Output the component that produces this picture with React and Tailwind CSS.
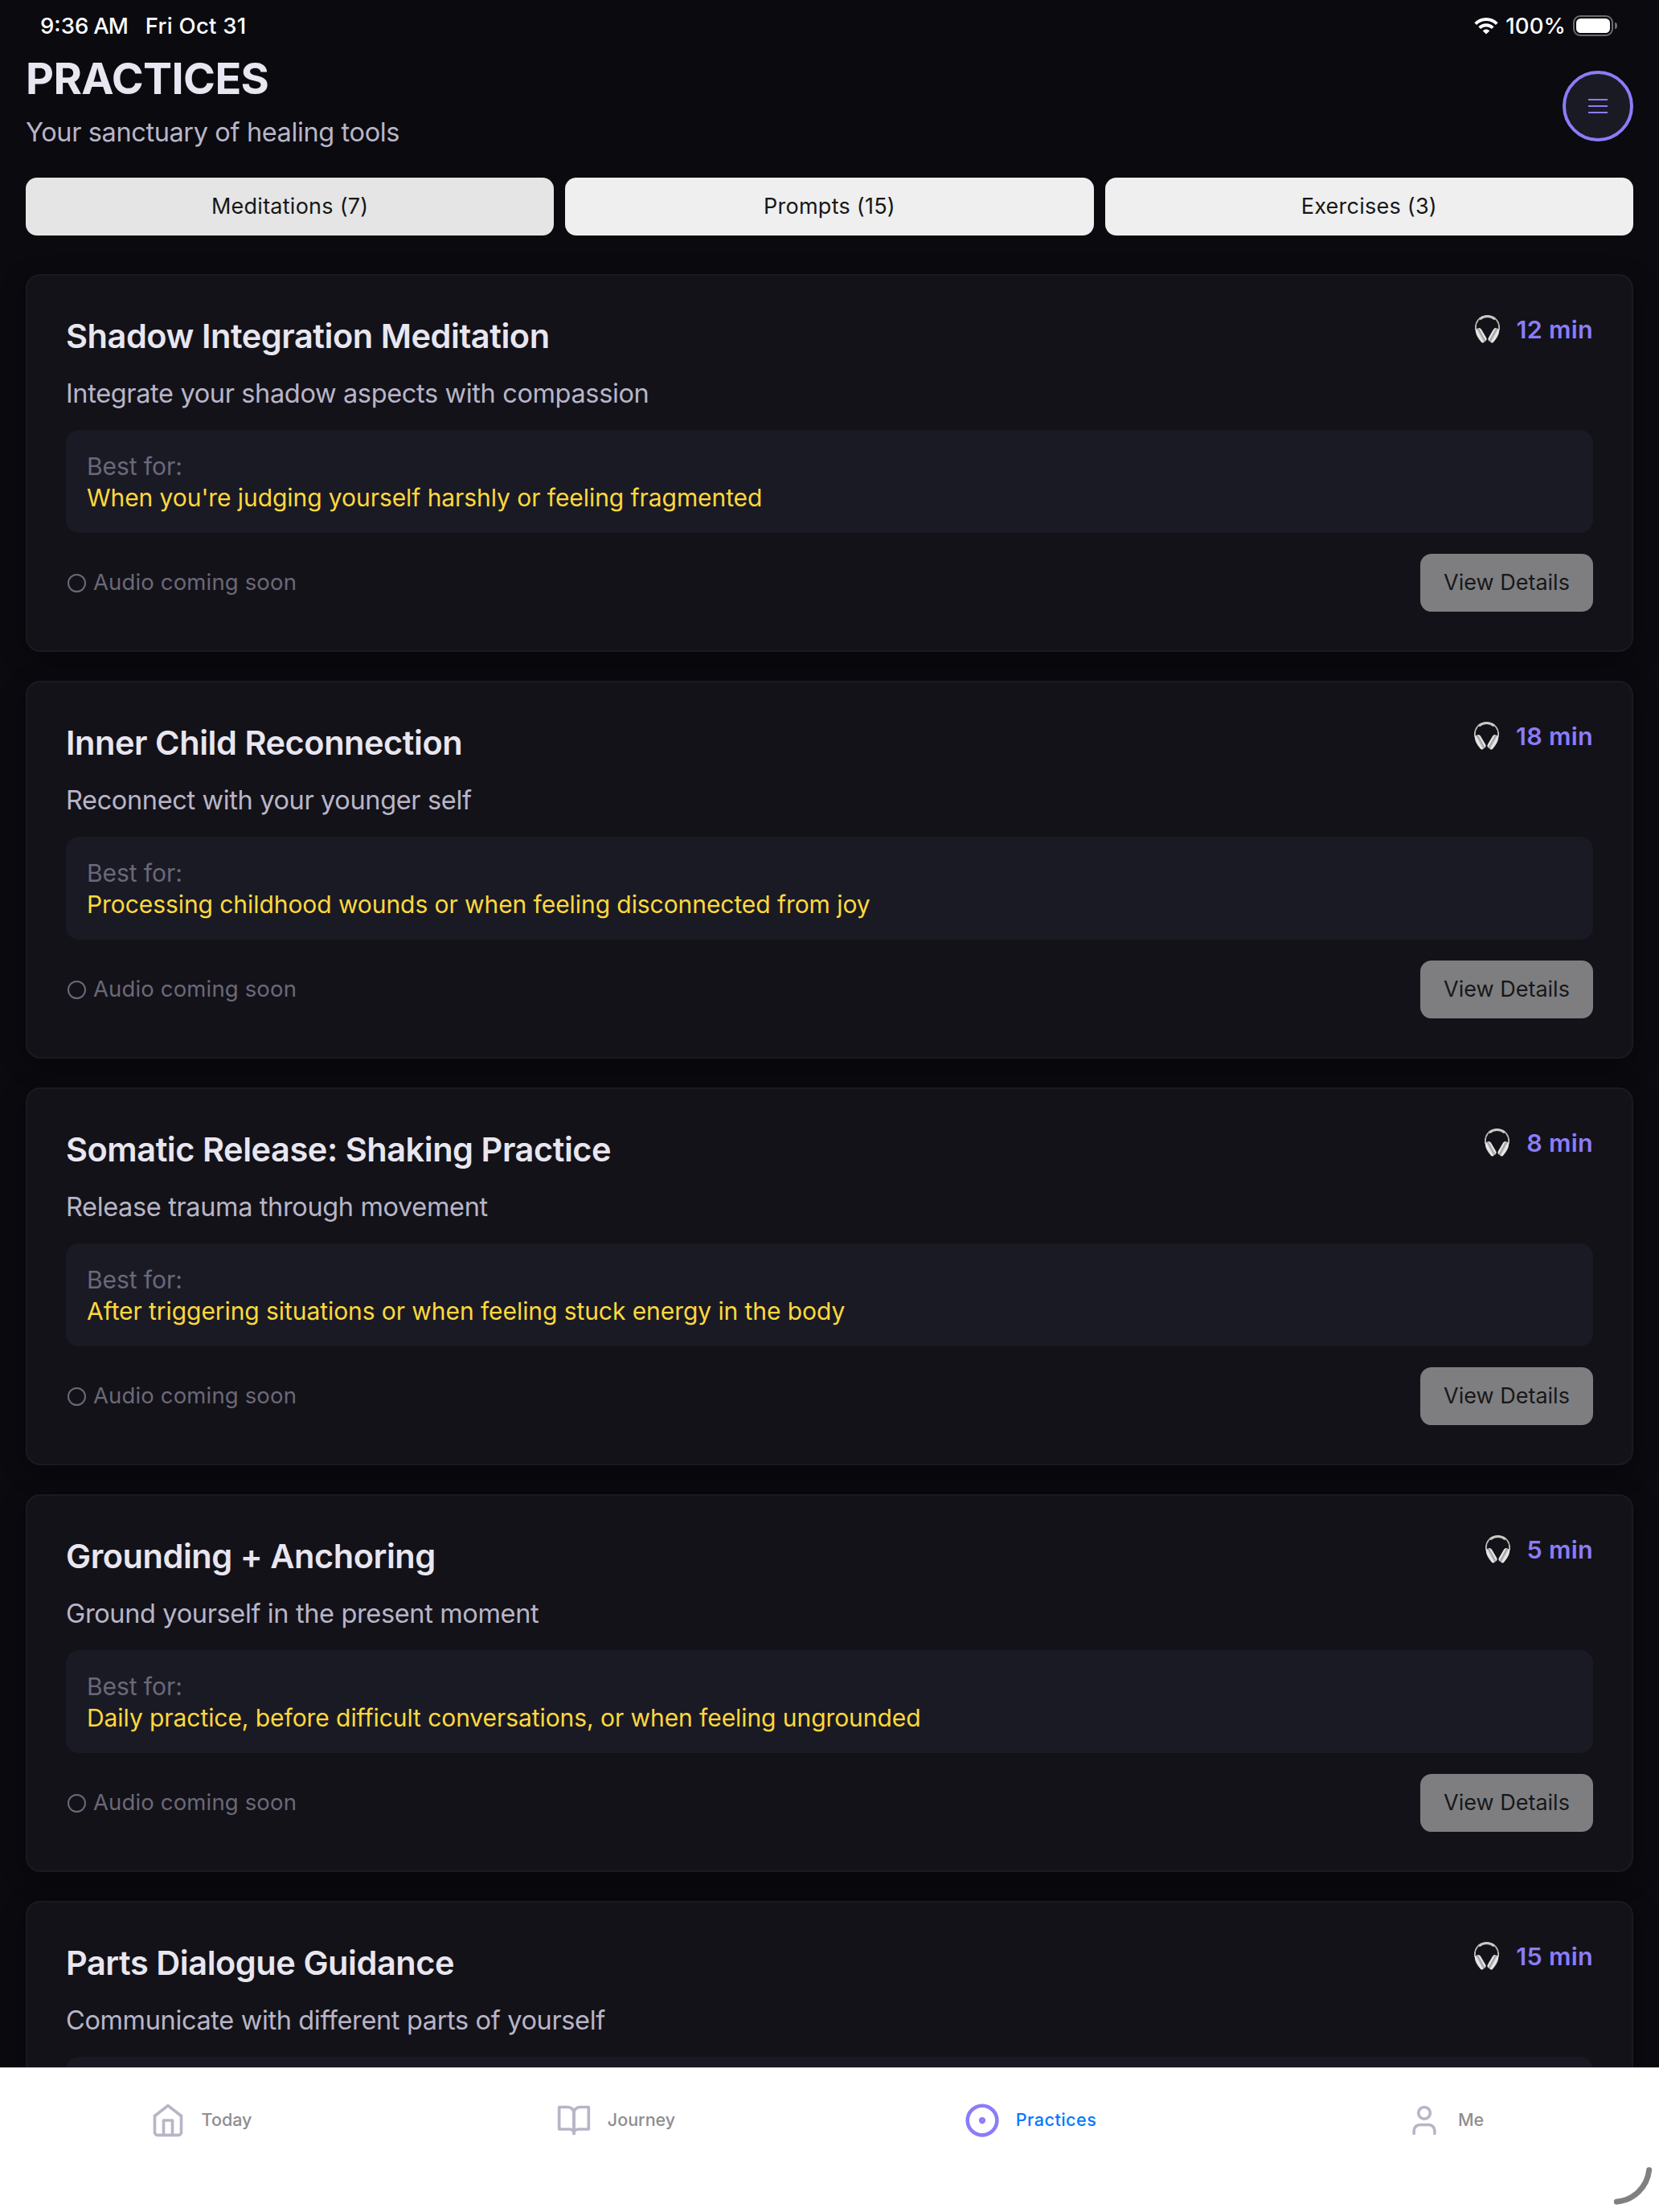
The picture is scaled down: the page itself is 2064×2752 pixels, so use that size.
const practices = [
  { title: 'Shadow Integration Meditation', desc: 'Integrate your shadow aspects with compassion', best: "When you're judging yourself harshly or feeling fragmented", min: 12 },
  { title: 'Inner Child Reconnection', desc: 'Reconnect with your younger self', best: 'Processing childhood wounds or when feeling disconnected from joy', min: 18 },
  { title: 'Somatic Release: Shaking Practice', desc: 'Release trauma through movement', best: 'After triggering situations or when feeling stuck energy in the body', min: 8 },
  { title: 'Grounding + Anchoring', desc: 'Ground yourself in the present moment', best: 'Daily practice, before difficult conversations, or when feeling ungrounded', min: 5 },
  { title: 'Parts Dialogue Guidance', desc: 'Communicate with different parts of yourself', min: 15 },
];

function Headphones() {
  const cup = 'M1.2 18.2 Q2.8 15.8 5.6 16 Q7.2 16.4 8 17.8 L14.2 28.2 Q15.4 30.8 13.2 32.4 L10.6 34.3 Q9 35 7.8 33.6 Q1.6 26.6 0.8 20.6 Z';
  return (
    <svg width="31" height="35" viewBox="0 0 31 35" fill="none" className="-translate-y-px">
      <defs>
        <linearGradient id="cup" x1="1" y1="27" x2="12" y2="21" gradientUnits="userSpaceOnUse">
          <stop offset="0" stopColor="#b4b4b4" />
          <stop offset="0.35" stopColor="#f2f2f2" />
          <stop offset="0.6" stopColor="#9a9a9a" />
          <stop offset="0.75" stopColor="#ececec" />
          <stop offset="1" stopColor="#c4c4c4" />
        </linearGradient>
      </defs>
      <path d="M1.2 19 C-0.6 8.5 5.5 1.4 15.5 1.4 C25.5 1.4 31.6 8.5 29.8 19" stroke="#b9b9b5" strokeWidth="1.9" />
      <path d="M6 5 Q10.5 1.6 15.5 1.6 Q20.5 1.6 25 5" stroke="#c9c9c5" strokeWidth="3" />
      <path d={cup} fill="url(#cup)" />
      <path d={cup} fill="url(#cup)" transform="translate(31 0) scale(-1 1)" />
    </svg>
  );
}

function Wifi() {
  return (
    <svg width="30" height="21" viewBox="0 0 30 21" fill="none">
      <path d="M1.7 7.6 C9.2 0.2 20.8 0.2 28.3 7.6" stroke="#fff" strokeWidth="3.9" />
      <path d="M6.7 12.6 C11.4 8.1 18.6 8.1 23.3 12.6" stroke="#fff" strokeWidth="3.9" />
      <path d="M10.8 16.4 C13.2 14 16.8 14 19.2 16.4 L15 20.6 Z" fill="#fff" />
    </svg>
  );
}

function NavIcon({ children, active }) {
  return (
    <svg width="44" height="44" viewBox="0 0 24 24" fill="none" stroke={active ? '#8b7cf8' : '#b8b5c8'} strokeWidth={active ? 2.5 : 2} strokeLinecap="round" strokeLinejoin="round">
      {children}
    </svg>
  );
}

function NavItem({ label, labelClass, active, children }) {
  return (
    <div className="flex h-11 flex-1 items-center justify-center gap-5 pr-4">
      <NavIcon active={active}>{children}</NavIcon>
      <span className={`pb-px text-[21.5px] leading-[42px] font-medium ${labelClass}`}>{label}</span>
    </div>
  );
}

function Tab({ label, active }) {
  return (
    <button className={`flex h-[72px] flex-1 items-center justify-center rounded-[14px] text-[27px] tracking-[0.25px] text-[#171717] ${active ? 'bg-[#e5e5e5]' : 'bg-[#efefef]'}`}>
      {label}
    </button>
  );
}

function Card({ title, desc, best, min }) {
  return (
    <article className="h-[470px] shrink-0 rounded-[18px] border-2 border-[#1a1a24] bg-[#131218] p-12 shadow-[0_8px_32px_rgba(0,0,0,0.3)]">
      <div className="flex h-[54px] items-start justify-between">
        <h2 className="text-[41.5px] leading-[54px] font-semibold tracking-[-0.45px] text-[#e8e6f0]">{title}</h2>
        <div className="flex h-[39px] items-center gap-[21px]">
          <Headphones />
          <span className="text-[30.5px] leading-[37px] pb-0.5 font-semibold tracking-[0.3px] text-[#8b7cf8]">{min} min</span>
        </div>
      </div>
      <p className="mt-[23px] text-[32.5px] leading-11 tracking-[-0.36px] text-[#b8b5c8]">{desc}</p>
      <div className="mt-[23px] h-32 rounded-2xl bg-[#1a1a24] px-[26px] pt-[26px] text-[30px] leading-[39px] tracking-[-0.07px]">
        {best && (
          <>
            <p className="text-[#6b6879]">Best for:</p>
            <p className="text-[#ffd93d]">{best}</p>
          </>
        )}
      </div>
      {best && (
        <div className="mt-[26px] flex h-[72px] items-center justify-between">
          <div className="flex items-center gap-[9px] pl-0.5 text-[27.5px] tracking-[0.15px] text-[#6b6879]">
            <span className="size-[23px] rounded-full border-2 border-[#6b6879]" />
            Audio coming soon
          </div>
          <button className="h-[72px] w-[215px] rounded-[14px] bg-[#7e7e80] text-[27px] text-[#171719]">View Details</button>
        </div>
      )}
    </article>
  );
}

export default function App() {
  return (
    <div className="relative flex h-[2752px] w-[2064px] flex-col overflow-hidden bg-[#0a0a0f] font-[Inter,sans-serif]">
      <div className="flex h-16 shrink-0 items-center justify-between pr-[52px] pl-[50px] text-[27.5px] font-medium text-white">
        <div className="flex pt-px">
          <span>9:36</span>
          <span className="ml-1.5 tracking-[-1px]">AM</span>
          <span className="ml-[22px] tracking-[0.25px]">Fri Oct 31</span>
        </div>
        <div className="flex items-center">
          <Wifi />
          <span className="ml-[9px] pt-px tracking-[0.1px]">100%</span>
          <div className="ml-[9px] h-[26px] w-[50px] rounded-[9px] border-2 border-[#6c6c6f] p-[1.6px]">
            <div className="h-full rounded-[5.5px] bg-white" />
          </div>
          <div className="ml-0.5 h-2 w-[3px] rounded-r-full bg-[#6c6c6f]" />
        </div>
      </div>

      <header className="flex h-[136px] shrink-0 justify-between px-8">
        <div className="pt-px">
          <h1 className="text-[54px] leading-[66px] font-bold tracking-[-0.6px] text-[#e8e6f0]">PRACTICES</h1>
          <p className="mt-3 text-[32.5px] leading-11 tracking-[-0.38px] text-[#b8b5c8]">Your sanctuary of healing tools</p>
        </div>
        <button className="flex size-[88px] flex-col items-center justify-center gap-1.5 self-center rounded-full border-4 border-[#8b7cf8] bg-[#1a1a24]">
          <span className="h-0.5 w-6 bg-[#8b7cf8]" />
          <span className="h-0.5 w-6 bg-[#8b7cf8]" />
          <span className="h-0.5 w-6 bg-[#8b7cf8]" />
        </button>
      </header>

      <div className="mt-[21px] flex shrink-0 gap-3.5 px-8">
        <Tab label="Meditations (7)" active />
        <Tab label="Prompts (15)" />
        <Tab label="Exercises (3)" />
      </div>

      <main className="flex min-h-0 flex-1 flex-col gap-9 overflow-hidden px-8 pt-12">
        {practices.map((p) => (
          <Card key={p.title} {...p} />
        ))}
      </main>

      <nav className="flex h-[180px] shrink-0 items-start border-t border-[#d8d8d8] bg-white pt-[42.5px]">
        <NavItem label="Today" labelClass="text-[#8e8e8f]">
          <path d="M3 9l9-7 9 7v11a2 2 0 0 1-2 2H5a2 2 0 0 1-2-2z" />
          <path d="M9 22V12h6v10" />
        </NavItem>
        <NavItem label="Journey" labelClass="text-[#8e8e8f]">
          <path d="M2 3h6a4 4 0 0 1 4 4v14a3 3 0 0 0-3-3H2z" />
          <path d="M22 3h-6a4 4 0 0 0-4 4v14a3 3 0 0 1 3-3h7z" />
        </NavItem>
        <NavItem label="Practices" labelClass="text-[#007aff] tracking-[0.5px]" active>
          <circle cx="12" cy="12" r="10" />
          <circle cx="12" cy="12" r="1" />
        </NavItem>
        <NavItem label="Me" labelClass="text-[#8e8e8f]">
          <circle cx="12" cy="7" r="4" />
          <path d="M19 21v-2a4 4 0 0 0-4-4H9a4 4 0 0 0-4 4v2" />
        </NavItem>
      </nav>

      <svg className="absolute right-2 bottom-2" width="50" height="50" viewBox="2006 2694 50 50" fill="none">
        <path d="M2051.7 2699.7 A44.5 44.5 0 0 1 2011.3 2739.3" stroke="#808080" strokeWidth="7" strokeLinecap="round" />
      </svg>
    </div>
  );
}
